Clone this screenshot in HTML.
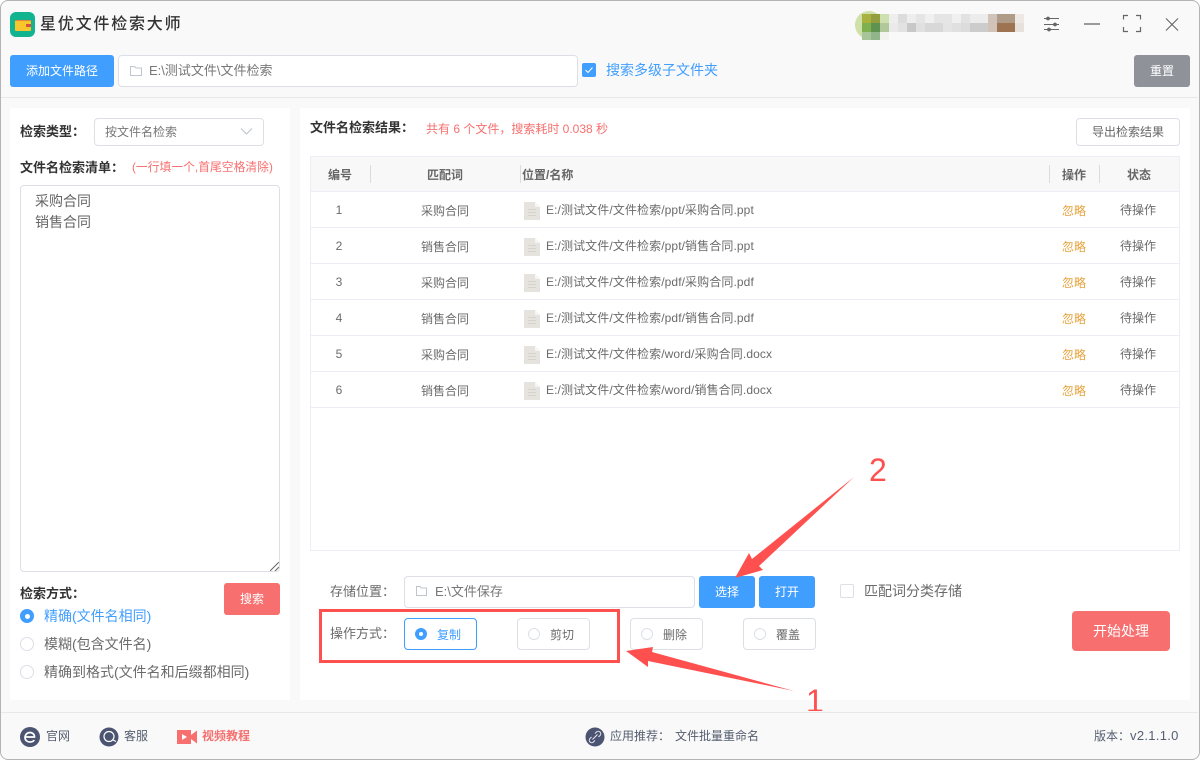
<!DOCTYPE html>
<html lang="zh"><head><meta charset="utf-8"><title>星优文件检索大师</title>
<style>
html,body{margin:0;padding:0;width:1200px;height:760px;overflow:hidden;background:#fff;font-family:"Liberation Sans","Noto Sans CJK SC",sans-serif}
#w{position:absolute;left:0;top:0;width:1198px;height:758px;background:#f9f9f9;border:1px solid #b4b4b4;border-radius:8px;overflow:hidden}
#r{position:absolute;left:0;top:0;width:1200px;height:760px}
.b{position:absolute;box-sizing:border-box}
.t{position:absolute;white-space:nowrap;line-height:20px;font-size:12px;color:#6b6b6b}
.in{border:1px solid #dcdfe6;border-radius:4px;background:#fff}
.btn{border-radius:3px;color:#fff;font-size:12px;text-align:center;line-height:32px}
.bl{background:#409eff}
.rd{background:#f76f6f}
.h{font-weight:700;font-size:13px;color:#333}
.th{font-weight:700;color:#666}
.c{text-align:center;transform:translateX(-50%)}
.p{letter-spacing:.1px}
.rad{position:absolute;box-sizing:border-box;width:14px;height:14px;border-radius:50%;background:#fff;border:1px solid #dcdfe6}
.rad.on{background:#409eff;border:0}
.rad.on:after{content:"";position:absolute;left:4.5px;top:4.5px;width:5px;height:5px;border-radius:50%;background:#fff}
.rad.s{width:12px;height:12px}
.rad.s.on:after{left:4px;top:4px;width:4px;height:4px}
.ln{position:absolute;background:#ebeef5}
.sep{position:absolute;width:1px;height:18px;top:165px;background:#dcdcdc}
</style></head><body>
<div id="r">
<div id="w"></div>

<!-- title -->
<div class="b" style="left:10px;top:12px;width:25px;height:25px;border-radius:6px;background:#11b48f"></div>
<div class="b" style="left:15px;top:20px;width:16px;height:11px;background:#f7c52c;border-radius:1px;border-top:1px solid #e8813a"></div>
<div class="b" style="left:26px;top:24px;width:5px;height:3px;background:#d9503c"></div>
<div class="t" style="left:40px;top:15px;font-size:16px;letter-spacing:1.8px;font-weight:500;color:#333">星优文件检索大师</div>

<!-- avatar + controls -->
<svg style="position:absolute;left:850px;top:8px" width="180" height="36">
<ellipse cx="19" cy="17" rx="14" ry="14" fill="#cfe0a8"/>
<g shape-rendering="crispEdges">
<rect x="12" y="6" width="9" height="9" fill="#a9b13f"/><rect x="21" y="6" width="9" height="9" fill="#939f3e"/><rect x="30" y="6" width="9" height="9" fill="#cfe0b0"/><rect x="39" y="6" width="9" height="9" fill="#eee"/><rect x="48" y="6" width="9" height="9" fill="#dcdcdc"/><rect x="57" y="6" width="9" height="9" fill="#eee"/><rect x="66" y="6" width="9" height="9" fill="#e5e5e5"/><rect x="75" y="6" width="9" height="9" fill="#f0f0f0"/><rect x="84" y="6" width="18" height="9" fill="#e5e5e5"/><rect x="102" y="6" width="9" height="9" fill="#f0f0f0"/><rect x="111" y="6" width="9" height="9" fill="#e2e2e2"/><rect x="120" y="6" width="18" height="9" fill="#ececec"/><rect x="138" y="6" width="9" height="9" fill="#d0c4ba"/><rect x="147" y="6" width="18" height="9" fill="#b09a88"/><rect x="165" y="6" width="9" height="9" fill="#eee8e4"/>
<rect x="12" y="15" width="9" height="9" fill="#7fb04f"/><rect x="21" y="15" width="9" height="9" fill="#5f9150"/><rect x="30" y="15" width="9" height="9" fill="#b0c89a"/><rect x="39" y="15" width="9" height="9" fill="#eaeaea"/><rect x="48" y="15" width="9" height="9" fill="#e2e2e2"/><rect x="57" y="15" width="9" height="9" fill="#c8c8c8"/><rect x="66" y="15" width="9" height="9" fill="#e0e0e0"/><rect x="75" y="15" width="18" height="9" fill="#d8d8d8"/><rect x="93" y="15" width="9" height="9" fill="#e4e4e4"/><rect x="102" y="15" width="9" height="9" fill="#e0e0e0"/><rect x="111" y="15" width="9" height="9" fill="#dcdcdc"/><rect x="120" y="15" width="18" height="9" fill="#ccc"/><rect x="138" y="15" width="9" height="9" fill="#d0c4ba"/><rect x="147" y="15" width="18" height="9" fill="#9e7352"/><rect x="165" y="15" width="9" height="9" fill="#e8e0da"/>
<rect x="12" y="24" width="9" height="8" fill="#a8c59a"/><rect x="21" y="24" width="9" height="8" fill="#90b58a"/><rect x="30" y="24" width="9" height="8" fill="#f2f2ee"/>
</g></svg>
<svg style="position:absolute;left:1030px;top:8px" width="160" height="34" fill="none" stroke="#666" stroke-width="1">
<path d="M14 10.500H29M14 16.500H29M14 21.500H29"/><circle cx="18" cy="10.500" r="1.400" fill="#666"/><circle cx="25" cy="16.500" r="1.400" fill="#666"/><circle cx="19" cy="21.500" r="1.400" fill="#666"/>
<path d="M54 16H70" stroke-width="1.300"/>
<path d="M93.500 11.500V7.500H98M106 7.500H110.500V11.500M110.500 19V23.500H106M98 23.500H93.500V19" stroke-width="1.200"/>
<path d="M136 10.500L148 22.500M148 10.500L136 22.500" stroke-width="1.100"/>
</svg>

<!-- toolbar -->
<div class="b btn bl" style="left:10px;top:55px;width:104px;height:32px">添加文件路径</div>
<div class="b in" style="left:118px;top:55px;width:460px;height:32px"></div>
<svg style="position:absolute;left:129px;top:64px" width="14" height="13" fill="none" stroke="#c0c4cc"><path d="M1.500 2.500H5.500L7 4H12.500V11.500H1.500Z"/></svg>
<div class="t" style="left:149px;top:61px;font-size:13px;color:#777">E:\测试文件\文件检索</div>
<div class="b" style="left:582px;top:63px;width:14px;height:14px;background:#409eff;border-radius:2px"></div>
<svg style="position:absolute;left:582px;top:63px" width="14" height="14" fill="none" stroke="#fff" stroke-width="1"><path d="M3.500 7L6 9.500L10.500 4.500"/></svg>
<div class="t" style="left:606px;top:60px;font-size:14px;color:#409eff">搜索多级子文件夹</div>
<div class="b btn" style="left:1134px;top:55px;width:56px;height:32px;background:#8f9299">重置</div>
<div class="ln" style="left:1px;top:97px;width:1197px;height:1px;background:#e8e8e8"></div>

<!-- left panel -->
<div class="b" style="left:10px;top:108px;width:280px;height:592px;background:#fff"></div>
<div class="t h" style="left:20px;top:122px">检索类型&#xFF1A;</div>
<div class="b in" style="left:94px;top:118px;width:170px;height:28px"></div>
<div class="t" style="left:105px;top:122px;color:#777">按文件名检索</div>
<svg style="position:absolute;left:240px;top:127px" width="13" height="9" fill="none" stroke="#c0c4cc" stroke-width="1.100"><path d="M1 1.500L6.500 7L12 1.500"/></svg>
<div class="t h" style="left:20px;top:158px">文件名检索清单&#xFF1A;</div>
<div class="t" style="left:132px;top:157px;color:#f76f6f;font-size:11.800px">(一行填一个,首尾空格清除)</div>
<div class="b in" style="left:20px;top:185px;width:260px;height:387px"></div>
<div class="t" style="left:35px;top:191px;font-size:14px;line-height:21px;color:#666">采购合同<br>销售合同</div>
<svg style="position:absolute;left:270px;top:562px" width="9" height="9" stroke="#666" stroke-width="1"><path d="M0 9L9 0M5 9L9 5"/></svg>

<div class="t h" style="left:20px;top:584px">检索方式&#xFF1A;</div>
<div class="b btn rd" style="left:224px;top:583px;width:56px;height:32px">搜索</div>
<div class="rad on" style="left:20px;top:609px"></div>
<div class="t" style="left:44px;top:606px;font-size:14px;color:#409eff">精确(文件名相同)</div>
<div class="rad" style="left:20px;top:637px"></div>
<div class="t" style="left:44px;top:634px;font-size:14px">模糊(包含文件名)</div>
<div class="rad" style="left:20px;top:665px"></div>
<div class="t" style="left:44px;top:662px;font-size:14px">精确到格式(文件名和后缀都相同)</div>

<!-- right panel -->
<div class="b" style="left:300px;top:108px;width:890px;height:592px;background:#fff"></div>
<div class="t h" style="left:310px;top:118px">文件名检索结果&#xFF1A;</div>
<div class="t" style="left:426px;top:119px;color:#f76f6f">共有 6 个文件&#xFF0C;搜索耗时 0.038 秒</div>
<div class="b in" style="left:1076px;top:118px;width:104px;height:28px;text-align:center;line-height:26px;font-size:12px;color:#666">导出检索结果</div>

<!-- table -->
<div class="b" style="left:310px;top:156px;width:870px;height:395px;border:1px solid #ebeef5"></div>
<div class="b" style="left:311px;top:157px;width:868px;height:34px;background:#f8f8f8"></div>
<div class="ln" style="left:311px;top:191px;width:868px;height:1px"></div>
<div class="sep" style="left:370px"></div><div class="sep" style="left:520px"></div><div class="sep" style="left:1049px"></div><div class="sep" style="left:1099px"></div>
<div class="t th" style="left:328px;top:165px">编号</div>
<div class="t th" style="left:427px;top:165px">匹配词</div>
<div class="t th" style="left:522px;top:165px">位置/名称</div>
<div class="t th" style="left:1062px;top:165px">操作</div>
<div class="t th" style="left:1127px;top:165px">状态</div>

<svg style="position:absolute;left:524px;top:192px" width="17" height="216">
<defs><g id="f"><path d="M0 10H11L16 15V28H0Z" fill="#e6e3df"/><path d="M11 10L16 15H11Z" fill="#f6f5f3"/><path d="M4 17.500H12M4 20.500H12M4 23.500H12" stroke="#d6d2cc" fill="none"/></g></defs>
<use href="#f"/><use href="#f" y="36"/><use href="#f" y="72"/><use href="#f" y="108"/><use href="#f" y="144"/><use href="#f" y="180"/>
</svg>

<div class="ln" style="left:311px;top:227px;width:868px;height:1px"></div>
<div class="ln" style="left:311px;top:263px;width:868px;height:1px"></div>
<div class="ln" style="left:311px;top:299px;width:868px;height:1px"></div>
<div class="ln" style="left:311px;top:335px;width:868px;height:1px"></div>
<div class="ln" style="left:311px;top:371px;width:868px;height:1px"></div>
<div class="ln" style="left:311px;top:407px;width:868px;height:1px"></div>

<div class="t c" style="left:339px;top:200px">1</div><div class="t" style="left:421px;top:201px">采购合同</div><div class="t p" style="left:546px;top:200px">E:/测试文件/文件检索/ppt/采购合同.ppt</div><div class="t" style="left:1062px;top:201px;color:#e6a23c">忽略</div><div class="t" style="left:1120px;top:200px">待操作</div>
<div class="t c" style="left:339px;top:236px">2</div><div class="t" style="left:421px;top:237px">销售合同</div><div class="t p" style="left:546px;top:236px">E:/测试文件/文件检索/ppt/销售合同.ppt</div><div class="t" style="left:1062px;top:237px;color:#e6a23c">忽略</div><div class="t" style="left:1120px;top:236px">待操作</div>
<div class="t c" style="left:339px;top:272px">3</div><div class="t" style="left:421px;top:273px">采购合同</div><div class="t p" style="left:546px;top:272px">E:/测试文件/文件检索/pdf/采购合同.pdf</div><div class="t" style="left:1062px;top:273px;color:#e6a23c">忽略</div><div class="t" style="left:1120px;top:272px">待操作</div>
<div class="t c" style="left:339px;top:308px">4</div><div class="t" style="left:421px;top:309px">销售合同</div><div class="t p" style="left:546px;top:308px">E:/测试文件/文件检索/pdf/销售合同.pdf</div><div class="t" style="left:1062px;top:309px;color:#e6a23c">忽略</div><div class="t" style="left:1120px;top:308px">待操作</div>
<div class="t c" style="left:339px;top:344px">5</div><div class="t" style="left:421px;top:345px">采购合同</div><div class="t p" style="left:546px;top:344px">E:/测试文件/文件检索/word/采购合同.docx</div><div class="t" style="left:1062px;top:345px;color:#e6a23c">忽略</div><div class="t" style="left:1120px;top:344px">待操作</div>
<div class="t c" style="left:339px;top:380px">6</div><div class="t" style="left:421px;top:381px">销售合同</div><div class="t p" style="left:546px;top:380px">E:/测试文件/文件检索/word/销售合同.docx</div><div class="t" style="left:1062px;top:381px;color:#e6a23c">忽略</div><div class="t" style="left:1120px;top:380px">待操作</div>

<!-- bottom controls -->
<div class="t" style="left:330px;top:582px;font-size:13px">存储位置&#xFF1A;</div>
<div class="b in" style="left:404px;top:576px;width:291px;height:32px"></div>
<svg style="position:absolute;left:415px;top:585px" width="14" height="13" fill="none" stroke="#c0c4cc"><path d="M1.500 1.500H5L6.500 3H11.500V10.500H1.500Z"/></svg>
<div class="t" style="left:435px;top:582px;font-size:13px;color:#777">E:\文件保存</div>
<div class="b btn bl" style="left:699px;top:576px;width:56px;height:32px">选择</div>
<div class="b btn bl" style="left:759px;top:576px;width:56px;height:32px">打开</div>
<div class="b" style="left:840px;top:584px;width:14px;height:14px;border:1px solid #dcdfe6;border-radius:2px;background:#fff"></div>
<div class="t" style="left:864px;top:581px;font-size:14px">匹配词分类存储</div>

<div class="t" style="left:330px;top:624px;font-size:13px">操作方式&#xFF1A;</div>
<div class="b in" style="left:404px;top:618px;width:73px;height:32px;border-color:#409eff"></div>
<div class="rad s on" style="left:415px;top:628px"></div>
<div class="t" style="left:437px;top:625px;color:#409eff">复制</div>
<div class="b in" style="left:517px;top:618px;width:73px;height:32px"></div>
<div class="rad s" style="left:528px;top:628px"></div>
<div class="t" style="left:550px;top:625px">剪切</div>
<div class="b in" style="left:630px;top:618px;width:73px;height:32px"></div>
<div class="rad s" style="left:641px;top:628px"></div>
<div class="t" style="left:663px;top:625px">删除</div>
<div class="b in" style="left:743px;top:618px;width:73px;height:32px"></div>
<div class="rad s" style="left:754px;top:628px"></div>
<div class="t" style="left:776px;top:625px">覆盖</div>

<div class="b" style="left:1072px;top:611px;width:98px;height:40px;background:#f76f6f;border-radius:4px;color:#fff;text-align:center;line-height:40px;font-size:14px">开始处理</div>

<!-- footer -->
<div class="ln" style="left:1px;top:712px;width:1197px;height:1px;background:#e8e8e8"></div>
<svg style="position:absolute;left:0;top:712px" width="620" height="48">
<circle cx="30" cy="25" r="10" fill="#4b5470"/>
<path d="M25.500 25H34.500C34.500 21.500 31.500 20.500 30 20.500C27 20.500 25 23 25 25.500C25 28.500 27.500 30 30 30C32 30 33.500 29.200 34.200 28" fill="none" stroke="#fff" stroke-width="1.700"/>
<circle cx="109" cy="25" r="9.500" fill="#4b5470"/>
<circle cx="109" cy="24.500" r="5" fill="none" stroke="#fff" stroke-width="1.200"/><path d="M113 28L116 29.500" stroke="#fff" stroke-width="1.200"/>
<path d="M177 18H191V23L197 18.500V31.500L191 27V32H177Z" fill="#f76f6f"/><path d="M182 22V28L187 25Z" fill="#fff"/>
<circle cx="595" cy="25" r="9.500" fill="#4b5470"/>
<path d="M592.500 27.500L597.500 22.500M591.500 25L590 26.500A2.200 2.200 0 0 0 593.500 30L595 28.500M595 21.500L596.500 20A2.200 2.200 0 0 1 600 23.500L598.500 25" fill="none" stroke="#e8e8ee" stroke-width="1"/>
</svg>
<div class="t" style="left:46px;top:726px;color:#555e70">官网</div>
<div class="t" style="left:124px;top:726px;color:#555e70">客服</div>
<div class="t" style="left:202px;top:726px;font-weight:700;color:#f76f6f">视频教程</div>
<div class="t" style="left:610px;top:726px;color:#555e70">应用推荐&#xFF1A;</div>
<div class="t" style="left:675px;top:726px;color:#555e70">文件批量重命名</div>
<div class="t" style="left:1094px;top:726px;color:#555e70">版本&#xFF1A;<span style="font-size:13px;letter-spacing:.3px">v2.1.1.0</span></div>

<!-- annotations -->
<svg style="position:absolute;left:0;top:0" width="1200" height="760">
<rect x="320.500" y="610.500" width="298" height="51" fill="none" stroke="#ff5050" stroke-width="3"/>
<path d="M626 651L653 647L652 652L794 691L648 661L648 667Z" fill="#ff5050"/>
<path d="M735 578L749 553L752 559L854 477L759 566L763 570Z" fill="#ff5050"/>
</svg>
<div class="t" style="left:869px;top:450px;font-size:32px;line-height:40px;color:#ff5050">2</div>
<div style="position:absolute;left:800px;top:680px;width:40px;height:31px;overflow:hidden"><div class="t" style="left:6px;top:1px;font-size:32px;line-height:40px;color:#ff5050">1</div></div>
</div>
</body></html>
